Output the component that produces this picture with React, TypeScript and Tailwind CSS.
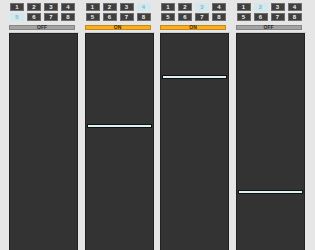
import { useState } from 'react'

type Channel = {
  selected: number
  on: boolean
  level: number | null
}

const initialChannels: Channel[] = [
  { selected: 5, on: false, level: null },
  { selected: 4, on: true, level: 90 },
  { selected: 3, on: true, level: 41 },
  { selected: 2, on: false, level: 156 },
]

const App = () => {
  const [channels, setChannels] = useState<Channel[]>(initialChannels)

  const pick = (index: number, value: number) => {
    setChannels((prev) => prev.map((ch, i) => (i === index ? { ...ch, selected: value } : ch)))
  }

  const toggle = (index: number) => {
    setChannels((prev) => prev.map((ch, i) => (i === index ? { ...ch, on: !ch.on } : ch)))
  }

  return (
    <div className="h-[250px] overflow-hidden bg-[#e6e6e6] font-['Liberation_Sans',Arial,sans-serif]">
      <div className="grid w-[302px] grid-cols-4 pl-[8px] box-content">
        {channels.map((ch, index) => (
          <div key={index} className="flex w-[71px] flex-col pl-[1px] pt-[3px]">
            <div className="grid w-[66px] grid-cols-4 gap-x-[3px] gap-y-[2px] pl-[1px]">
              {[1, 2, 3, 4, 5, 6, 7, 8].map((n) => (
                <button
                  key={n}
                  onClick={() => pick(index, n)}
                  className={
                    ch.selected === n
                      ? 'flex h-[8px] w-[14px] items-center justify-center rounded-[1px] bg-[#cfe9ee] text-[6px] font-bold leading-none text-[#8fb3bd]'
                      : 'flex h-[8px] w-[14px] items-center justify-center rounded-[1px] bg-[#3f3f3f] text-[6px] font-bold leading-none text-[#f0f0f0] shadow-[0_0_0_1px_#6e6e6e_inset]'
                  }
                >
                  {n}
                </button>
              ))}
            </div>
            <button
              onClick={() => toggle(index)}
              className={
                ch.on
                  ? 'mt-[4px] flex h-[5px] w-[66px] items-center justify-center overflow-visible bg-[#f8ad26] text-[5px] font-bold leading-none text-[#3a2a00] shadow-[0_0_0_1px_#c98a10_inset]'
                  : 'mt-[4px] flex h-[5px] w-[66px] items-center justify-center overflow-visible bg-[#a3a3a3] text-[5px] font-bold leading-none text-[#2a2a2a] shadow-[0_0_0_1px_#858585_inset]'
              }
            >
              {ch.on ? 'ON' : 'OFF'}
            </button>
            <div className="mt-[2px] border-t border-[#cfcfcf]">
              <div className="relative h-[240px] w-[69px] border border-[#222] bg-[#333333]">
                {ch.level !== null && (
                  <div
                    className="absolute left-[1px] right-[1px] h-[4px] border border-[#111] bg-[#daf2f6]"
                    style={{ top: ch.level }}
                  />
                )}
              </div>
            </div>
          </div>
        ))}
      </div>
    </div>
  )
}

export default App
